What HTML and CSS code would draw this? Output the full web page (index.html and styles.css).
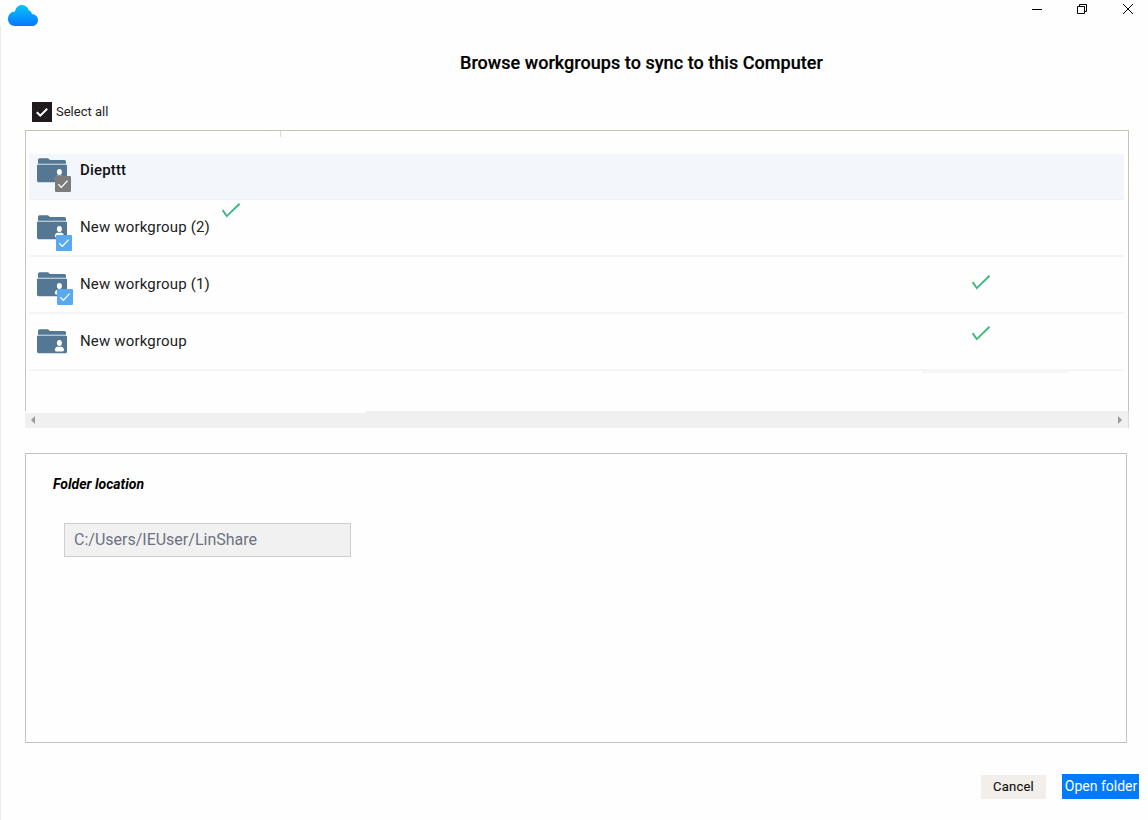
FILE: index.html
```html
<!DOCTYPE html>
<html lang="en">
<head>
<meta charset="utf-8">
<title>Browse workgroups</title>
<link rel="stylesheet" href="styles.css">
</head>
<body>
<svg class="defs" width="0" height="0">
  <defs>
    <symbol id="folder" viewBox="0 0 32 26">
      <path fill="#547793" d="M2 7V2.800Q2 1.200 3.700 1.200H12l2 1.800h14.500Q30 3 30 4.800V7z"/>
      <path fill="#b4c6d2" d="M1.500 6.600h28.500v1.500H1.500z"/>
      <path fill="#547793" d="M1 8h30v15.800q0 1.400-1.400 1.400H2.500Q1 25.200 1 23.500z"/>
      <ellipse cx="23.400" cy="15" rx="2.500" ry="3" fill="#fff"/>
      <path fill="#fff" d="M18.800 22q0-2.800 3.200-3.400 1.400.6 2.800 0 3.200.6 3.200 3.400 0 1.400-1.300 1.400h-6.600q-1.300 0-1.300-1.400z"/>
    </symbol>
    <symbol id="tick" viewBox="0 0 18 15">
      <path fill="none" stroke="#3fba82" stroke-width="1.900" d="M.6 7.100 4.800 13.100 17.500.8"/>
    </symbol>
    <symbol id="badge-tick" viewBox="0 0 16 16">
      <path fill="none" stroke="#fff" stroke-width="1.300" d="M3.300 8.300 6.300 11.400 12.600 4.600"/>
    </symbol>
  </defs>
</svg>
<div class="window">
  <header class="titlebar">
    <svg class="cloud" viewBox="0 0 30 21" width="30" height="21">
      <defs><linearGradient id="sky" x1="0" y1="0" x2="0" y2="1"><stop offset="0" stop-color="#04c6fb"/><stop offset="1" stop-color="#0a76ff"/></linearGradient></defs>
      <path fill="url(#sky)" d="M7 21C3 21 0 18.200 0 14 0 9.800 3 6.600 7 6.500 7.800 2.500 10.300 0 14 0c3.400 0 5.800 2.200 6.800 5.200 1.700.6 2.800 1.900 3.200 3.700 3.500.2 6 2.800 6 6 0 3.400-2.600 6.100-6 6.100z"/>
    </svg>
    <div class="controls">
      <svg width="10" height="10" viewBox="0 0 10 10"><path fill="#000" d="M0 5h10v1H0z"/></svg>
      <svg width="10" height="10" viewBox="0 0 10 10" fill="none" stroke="#000"><path d="M.5 2.500h7v7h-7zM2.500 2.500v-2h7v7h-2"/></svg>
      <svg width="10" height="10" viewBox="0 0 10 10" fill="none" stroke="#000"><path d="M0 0l10 10M10 0 0 10"/></svg>
    </div>
  </header>
  <h1 class="heading">Browse workgroups to sync to this Computer</h1>
  <div class="select-all">
    <svg class="checkbox" width="20" height="20" viewBox="0 0 20 20"><path fill="none" stroke="#fff" stroke-width="2" d="M4.800 10.200 8.300 13.700 15.200 6.800"/></svg>
    <span>Select all</span>
  </div>
  <main class="groups">
    <i class="column-mark"></i>
    <ul class="list">
      <li class="row selected"><span class="icon"><svg class="folder"><use href="#folder"/></svg><svg class="badge gray"><use href="#badge-tick"/></svg></span><span class="name">Diepttt</span></li>
      <li class="row"><span class="icon"><svg class="folder"><use href="#folder"/></svg><svg class="badge blue"><use href="#badge-tick"/></svg></span><span class="name">New workgroup (2)</span><svg class="tick near"><use href="#tick"/></svg></li>
      <li class="row"><span class="icon"><svg class="folder"><use href="#folder"/></svg><svg class="badge blue low"><use href="#badge-tick"/></svg></span><span class="name">New workgroup (1)</span><svg class="tick far"><use href="#tick"/></svg></li>
      <li class="row"><span class="icon"><svg class="folder"><use href="#folder"/></svg></span><span class="name">New workgroup</span><svg class="tick far raised"><use href="#tick"/></svg></li>
    </ul>
    <i class="shade"></i>
  </main>
  <div class="scrollbar">
    <svg width="4" height="8" viewBox="0 0 4 8"><path fill="#999" d="M4 0v8L0 4z"/></svg>
    <svg width="4" height="8" viewBox="0 0 4 8"><path fill="#999" d="M0 0v8l4-4z"/></svg>
  </div>
  <section class="location">
    <h2>Folder location</h2>
    <div class="path"><span>C:/Users/IEUser/LinShare</span></div>
  </section>
  <footer class="actions">
    <button class="cancel">Cancel</button>
    <button class="open">Open folder</button>
  </footer>
</div>
</body>
</html>
```
FILE: styles.css
```css
* { box-sizing: border-box; }
body { margin: 0; background: #fefefe; color: #000; font-family: Roboto, sans-serif; }
svg { display: block; flex: none; }
.defs { position: absolute; }
.window { width: 1148px; height: 820px; overflow: hidden; display: flex; flex-direction: column; background: linear-gradient(#f0ebe6, #f0ebe6) 0 26px / 1px 100% no-repeat; }
.titlebar { display: flex; justify-content: space-between; height: 32px; padding: 5px 15px 0 8px; flex: none; }
.controls { display: flex; gap: 36px; margin-top: -1px; }
.controls svg:first-child { margin-right: -1px; }
.heading { margin: 20px 0 0 460px; height: 22px; font-size: 18px; line-height: 22px; font-weight: 500; letter-spacing: .045px; white-space: nowrap; -webkit-text-stroke: .2px #000; }
.select-all { display: flex; align-items: center; gap: 4px; height: 20px; margin: 28px 0 8px 32px; font-size: 13px; line-height: 20px; color: #222; }
.checkbox { background: #1f1a1b; }
.groups { position: relative; width: 1104px; height: 281px; margin-left: 25px; padding: 23px 4px 0 3px; border: 1px solid #c8c3b9; border-bottom: 0; flex: none; }
.column-mark { position: absolute; left: 254px; top: 0; width: 1px; height: 6px; background: #dedad6; }
.list { margin: 0; padding: 0; list-style: none; }
.row { position: relative; display: flex; height: 57px; padding: 14px 0 0 7px; border-bottom: 2px solid #f5f5f5; }
.row.selected { height: 46px; padding-top: 3px; background: #f3f7fc; border-bottom: 1px solid #eff1f4; }
.icon { position: relative; width: 32px; height: 26px; }
.folder { width: 32px; height: 26px; }
.badge { position: absolute; left: 20px; top: 21px; width: 16px; height: 16px; border-radius: 1px; }
.badge.gray { left: 19px; top: 19px; background: #7c7c7c; }
.badge.blue { background: #58a9ef; }
.badge.low { left: 21px; top: 18px; }
.name { margin: 3px 0 0 12px; height: 20px; font-size: 15px; line-height: 20px; letter-spacing: .17px; color: #222; white-space: nowrap; }
.selected .name { font-weight: 500; color: #111; }
.tick { position: absolute; width: 18px; height: 15px; }
.near { left: 193px; top: 3px; }
.far { left: 943px; top: 18px; }
.raised { top: 12px; }
.shade { position: absolute; left: 896px; top: 240px; width: 146px; height: 2px; background: #f6f6f6; }
.scrollbar { display: flex; justify-content: space-between; align-items: center; width: 1104px; height: 17px; margin-left: 25px; padding: 0 6px 0 6px; background: linear-gradient(#fefefe, #fefefe) 0 0 / 341px 2px no-repeat, #f0f0f0; border-right: 1px solid #ddd9d5; flex: none; }
.location { width: 1102px; height: 290px; margin: 25px 0 0 25px; padding: 20px 0 0 27px; border: 1px solid #c2c2c2; flex: none; }
.location h2 { margin: 0; font-size: 14px; line-height: 20px; font-weight: 700; font-style: italic; letter-spacing: 0; }
.path { display: flex; align-items: center; width: 287px; height: 34px; margin: 29px 0 0 11px; padding: 0 0 2px 9px; border: 1px solid #ceced0; background: #f1f1f1; color: #6d7280; font-size: 16px; }
.actions { display: flex; gap: 16px; margin: 31px 0 0 981px; align-items: flex-start; }
button { border: 0; padding: 0 0 2px; font-family: Roboto, sans-serif; white-space: nowrap; }
.cancel { width: 65px; height: 24px; margin-top: 1px; background: #f2eeea; color: #111; font-size: 13px; letter-spacing: .2px; -webkit-text-stroke: .15px #111; }
.open { width: 77px; height: 25px; padding-left: 1px; background: #007bff; color: #fff; font-size: 14px; }
```
